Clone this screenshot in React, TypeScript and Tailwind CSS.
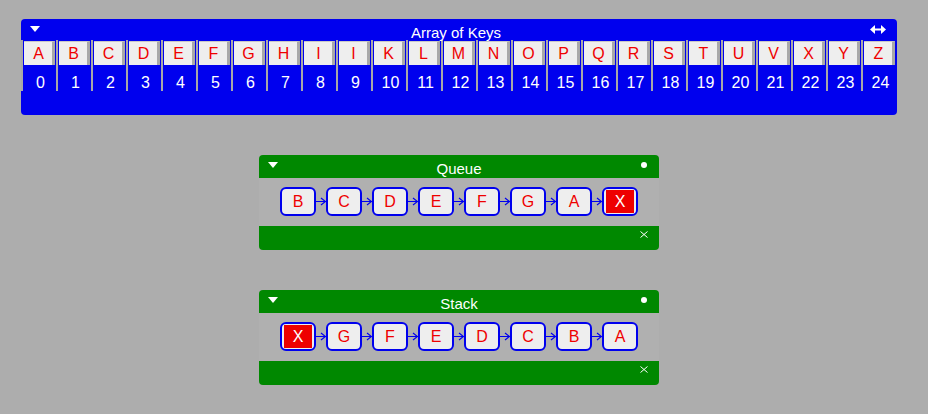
import React from "react";

const FONT = { fontFamily: '"Liberation Sans", Arial, sans-serif' };

const letters = ["A","B","C","D","E","F","G","H","I","I","K","L","M","N","O","P","Q","R","S","T","U","V","X","Y","Z"];

function Triangle() {
  return (
    <svg width="10" height="6" viewBox="0 0 10 6" className="absolute left-[9px] top-[7px]">
      <polygon points="0,0 10,0 5,6" fill="white" />
    </svg>
  );
}

function Arrow() {
  return (
    <svg width="10" height="29" viewBox="0 0 10 29" className="shrink-0">
      <line x1="0" y1="14.5" x2="10" y2="14.5" stroke="#0000ee" strokeWidth="1.2" />
      <polyline points="5,11 9.5,14.5 5,18" fill="none" stroke="#0000ee" strokeWidth="1.2" />
    </svg>
  );
}

function Node({ label, special }: { label: string; special?: boolean }) {
  if (special) {
    return (
      <div className="w-[36px] h-[29px] shrink-0 rounded-[6px] border-2 border-[#0000ee] bg-[#eeeeee] flex items-center justify-center">
        <div className="w-[28px] h-[23px] bg-[#ee0000] text-white text-[16px] leading-none flex items-center justify-center">
          {label}
        </div>
      </div>
    );
  }
  return (
    <div className="w-[36px] h-[29px] shrink-0 rounded-[6px] border-2 border-[#0000ee] bg-[#eeeeee] text-[#ee0000] text-[16px] leading-none flex items-center justify-center">
      {label}
    </div>
  );
}

function ListPanel({ title, items, specialIndex }: { title: string; items: string[]; specialIndex: number }) {
  return (
    <div className="mt-[40px] ml-[238px] w-[400px] h-[95px] rounded-[4px] bg-[#008800] flex flex-col overflow-hidden">
      <div className="relative h-[23px] shrink-0 flex items-center justify-center text-white text-[15px] leading-none pt-[4px]">
        <Triangle />
        {title}
        <div className="absolute right-[12px] top-[7px] w-[6px] h-[6px] rounded-full bg-white" />
      </div>
      <div className="h-[48px] shrink-0 bg-[#b0b0b0] flex items-center justify-center pb-[1px]">
        {items.map((it, i) => (
          <React.Fragment key={i}>
            {i > 0 && <Arrow />}
            <Node label={it} special={i === specialIndex} />
          </React.Fragment>
        ))}
      </div>
      <div className="relative flex-1">
        <svg width="8" height="7" viewBox="0 0 8 7" className="absolute right-[11px] top-[5px]">
          <line x1="0.5" y1="0.5" x2="7.5" y2="6.5" stroke="white" strokeWidth="1" />
          <line x1="7.5" y1="0.5" x2="0.5" y2="6.5" stroke="white" strokeWidth="1" />
        </svg>
      </div>
    </div>
  );
}

export default function App() {
  return (
    <div className="w-[928px] h-[414px] bg-[#adadad] pt-[19px] pl-[21px] overflow-hidden" style={FONT}>
      <div className="w-[876px] h-[96px] rounded-[4px] bg-[#0000ee] flex flex-col">
        <div className="relative h-[21px] shrink-0 flex items-center justify-center text-white text-[15px] leading-none pt-[6px] pr-[6px]">
          <Triangle />
          Array of Keys
          <svg width="16" height="9" viewBox="0 0 16 9" className="absolute right-[11px] top-[6px]">
            <polygon points="0,4.5 5,0 5,9" fill="white" />
            <polygon points="16,4.5 11,0 11,9" fill="white" />
            <rect x="4" y="3.5" width="8" height="2" fill="white" />
          </svg>
        </div>
        <div className="flex h-[51px]">
          {letters.map((l, i) => (
            <div key={i} className="flex w-[35px] shrink-0">
              <div className="w-[2px] h-full bg-[#a8a8a8]" />
              <div className="ml-[1px] w-[31px] flex flex-col">
                <div className="mt-[1px] h-[24px] border-t border-t-[#c8c8c8] border-r-[3px] border-r-[#a8a8a8] bg-[#eeeeee] text-[#ee0000] text-[16px] leading-none flex items-center justify-center pl-[1px]">
                  {l}
                </div>
                <div className="pt-[9px] h-[26px] text-white text-[16px] leading-[18px] text-center pl-[2px]">
                  {i}
                </div>
              </div>
            </div>
          ))}
        </div>
      </div>
      <ListPanel title="Queue" items={["B","C","D","E","F","G","A","X"]} specialIndex={7} />
      <ListPanel title="Stack" items={["X","G","F","E","D","C","B","A"]} specialIndex={0} />
    </div>
  );
}
